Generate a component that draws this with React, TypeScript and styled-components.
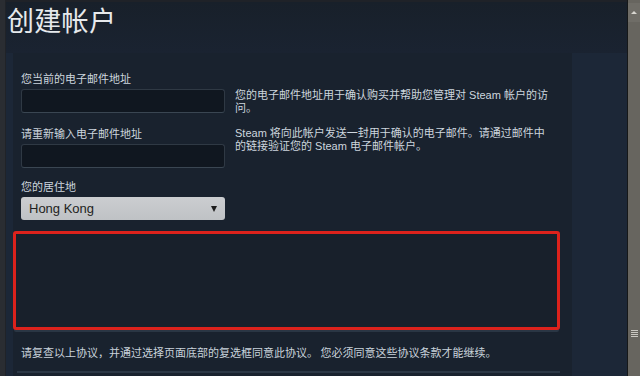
import React from "react";
import styled, { createGlobalStyle } from "styled-components";

const Global = createGlobalStyle`
  html, body { margin: 0; padding: 0; background: #1c2737; }
  body { width: 640px; height: 376px; overflow: hidden; }
  * { box-sizing: border-box; }
`;

const FONT = `Arial, "Liberation Sans", "Noto Sans CJK SC", sans-serif`;

const Window = styled.div`
  display: flex;
  width: 640px;
  height: 376px;
  overflow: hidden;
  font-family: ${FONT};
`;

const LeftEdge = styled.div`
  width: 6px;
  flex: none;
  background: #2a2d32;
  border-right: 1px solid #202328;
`;

const Main = styled.div`
  flex: 1;
  display: flex;
  flex-direction: column;
  background: #1c2737;
  border-top: 2px solid #1f2228;
  min-width: 0;
`;

const Header = styled.div`
  height: 51px;
  flex: none;
  background: linear-gradient(180deg, #18202a 0%, #1a2331 100%);
  padding: 1px 0 0 1px;
`;

const Title = styled.h1`
  margin: 0;
  font-family: "Noto Sans CJK SC", sans-serif;
  font-weight: 400;
  font-size: 27px;
  line-height: 34px;
  color: #e6e9ec;
  letter-spacing: 0.3px;
`;

const Body = styled.div`
  flex: 1;
  padding-left: 7px;
  padding-right: 55px;
`;

const Panel = styled.div`
  height: 100%;
  background: #19222e;
  padding: 17px 0 0 8px;
  display: flex;
  flex-direction: column;
`;

const Row = styled.div`
  display: flex;
  gap: 10px;
  margin-bottom: 10px;
`;

const LeftCol = styled.div`
  width: 204px;
  flex: none;
  display: flex;
  flex-direction: column;
`;

const Label = styled.div`
  font-family: "Noto Sans CJK SC", sans-serif;
  font-size: 11px;
  line-height: 16px;
  color: #cdd6de;
  margin-bottom: 3px;
`;

const Input = styled.div`
  height: 24px;
  background: #101720;
  border: 1px solid #2f3944;
  border-bottom-color: #3a4652;
  border-radius: 3px;
`;

const Select = styled.div`
  height: 23px;
  background: linear-gradient(180deg, #cbcdd0 0%, #bfc2c5 100%);
  border-radius: 3px;
  display: flex;
  align-items: center;
  justify-content: space-between;
  padding: 0 8px 0 8px;
  font-family: Arial, "Liberation Sans", sans-serif;
  font-size: 13px;
  color: #1e1f21;
`;

const Arrow = styled.span`
  width: 0;
  height: 0;
  border-left: 3.5px solid transparent;
  border-right: 3.5px solid transparent;
  border-top: 6px solid #1c1c1c;
  margin-top: 1px;
`;

const Desc = styled.div<{ $top: number }>`
  margin-top: ${(p) => p.$top}px;
  font-family: ${FONT};
  font-size: 11px;
  line-height: 13px;
  color: #cdd6de;
  white-space: nowrap;
`;

const AgreementBox = styled.div`
  width: 547px;
  height: 99px;
  margin-left: -8px;
  margin-top: 1px;
  border: 3px solid #dc221c;
  border-radius: 3px;
  background: #18202b;
  box-shadow: 0 3px 0 -1px #2a3644;
`;

const Notice = styled.div`
  font-family: "Noto Sans CJK SC", sans-serif;
  font-size: 11px;
  line-height: 16px;
  color: #c9d3dc;
  margin-top: 14px;
`;

const BottomLine = styled.div`
  margin-top: 11px;
  width: 543px;
  margin-left: -4px;
  height: 2px;
  background: #2b3745;
`;

const Scrollbar = styled.div`
  width: 13px;
  flex: none;
  background: #67655f;
  border-left: 1px solid #161819;
  display: flex;
  flex-direction: column;
  align-items: center;
  padding-top: 3px;
`;

const UpButton = styled.div`
  width: 12px;
  height: 19px;
  background: #6f6d67;
  display: flex;
  align-items: center;
  justify-content: center;
  &::after {
    content: "";
    border-left: 3px solid transparent;
    border-right: 3px solid transparent;
    border-bottom: 3px solid #d8d6d0;
  }
`;

const Grip = styled.div`
  margin-top: 308px;
  width: 7px;
  height: 8px;
  background: repeating-linear-gradient(180deg, #c9c7c1 0 1px, transparent 1px 2px);
`;

export default function App() {
  return (
    <>
      <Global />
      <Window>
        <LeftEdge />
        <Main>
          <Header>
            <Title>创建帐户</Title>
          </Header>
          <Body>
            <Panel>
              <Row>
                <LeftCol>
                  <Label>您当前的电子邮件地址</Label>
                  <Input />
                </LeftCol>
                <Desc $top={19}>
                  您的电子邮件地址用于确认购买并帮助您管理对 Steam 帐户的访
                  <br />
                  问。
                </Desc>
              </Row>
              <Row>
                <LeftCol>
                  <Label>请重新输入电子邮件地址</Label>
                  <Input />
                </LeftCol>
                <Desc $top={2}>
                  Steam 将向此帐户发送一封用于确认的电子邮件。请通过邮件中
                  <br />
                  的链接验证您的 Steam 电子邮件帐户。
                </Desc>
              </Row>
              <Row>
                <LeftCol>
                  <Label>您的居住地</Label>
                  <Select>
                    Hong Kong
                    <Arrow />
                  </Select>
                </LeftCol>
              </Row>
              <AgreementBox />
              <Notice>
                请复查以上协议，并通过选择页面底部的复选框同意此协议。 您必须同意这些协议条款才能继续。
              </Notice>
              <BottomLine />
            </Panel>
          </Body>
        </Main>
        <Scrollbar>
          <UpButton />
          <Grip />
        </Scrollbar>
      </Window>
    </>
  );
}
